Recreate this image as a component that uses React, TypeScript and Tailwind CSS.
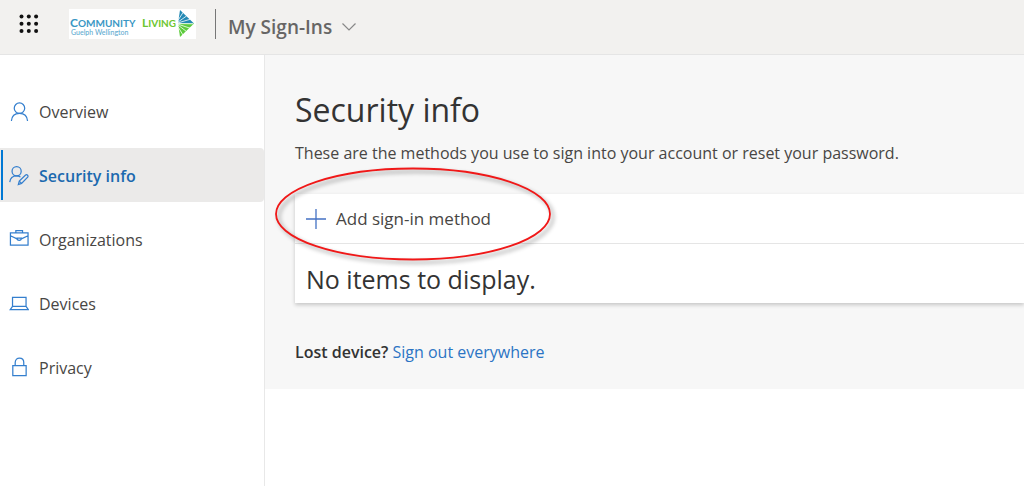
import type { ReactNode } from "react";

type NavItem = {
  label: string;
  icon: ReactNode;
  active?: boolean;
};

const NAV: NavItem[] = [
  {
    label: "Overview",
    icon: (
      <>
        <circle cx="11" cy="7" r="5.5" />
        <path d="M2.500 20.500c.4-5 3.800-8 8.500-8s8.100 3 8.500 8" />
      </>
    ),
  },
  {
    label: "Security info",
    active: true,
    icon: (
      <>
        <circle cx="8" cy="6" r="4.800" />
        <path d="M.8 17.500C1.200 13.500 4 10.800 8 10.800c1.600 0 2.800.5 4 1.400" />
        <path d="m9.800 20 1-3.600 6.600-6.400c1.600-1 3.200.8 2.200 2.200l-6.400 6.600zM10.800 16.400l2.400 2.400" />
      </>
    ),
  },
  {
    label: "Organizations",
    icon: (
      <>
        <path d="M1.500 3.500h18.500v12.800H1.500zM7.200 3.500V1.200h7v2.300M1.500 6.500l7 3.300M20 6.500l-7 3.300" />
        <path d="M8.400 9H13c0 3.200-4.600 3.200-4.600 0z" />
      </>
    ),
  },
  {
    label: "Devices",
    icon: <path d="M3.700 4h14.200v9.500H3.700zM3.700 13.500 1.300 17h19l-2.400-3.500" />,
  },
  {
    label: "Privacy",
    icon: (
      <>
        <path d="M4 8.500h14v10.500H4z" />
        <path d="M6.500 8.500V5.300c0-6.200 9-6.200 9 0v3.200" />
      </>
    ),
  },
];

const DOTS = [0, 1, 2].flatMap((row) => [0, 1, 2].map((col) => ({ row, col })));

function Logo() {
  return (
    <svg viewBox="0 0 127 30" className="h-[30px] w-[127px] bg-white" role="img" aria-label="Community Living Guelph Wellington">
      <g fontFamily="Lato, sans-serif">
        <text x="1" y="18" fontSize="12" fontWeight="700" fill="#3a97c4">
          C<tspan fontSize="10">OMMUNITY</tspan>
        </text>
        <text x="73" y="18" fontSize="12" fontWeight="700" fill="#6cc630">
          L<tspan fontSize="10">IVING</tspan>
        </text>
        <text x="2" y="26" fontSize="7" fontWeight="500" fill="#5fabd0">
          Guelph Wellington
        </text>
      </g>
      {/* fan of rays: blue above, green below */}
      <path d="M111 1 125 14.500H109z" fill="#2389b5" />
      <path d="M109 14.500h16L111 28z" fill="#5ccb3c" />
      <path d="m107 14.500 7-11M107 14.500l10.500-7.500M107 14.500l14-4.200M107 14.500l17 .3M107 14.500l14 4.700M107 14.500l10.500 8M107 14.500l7 11.500" stroke="#fff" strokeWidth=".8" />
    </svg>
  );
}

function Header() {
  return (
    <header className="flex h-[55px] items-start border-b border-[#e5e5e5] bg-[#f2f1ef] pl-[19px] pt-[9px]">
      <button type="button" aria-label="App launcher" className="flex h-[30px] w-5 items-center">
        <svg viewBox="0 0 20 20" className="size-5" fill="#111">
          {DOTS.map(({ row, col }) => (
            <circle key={`${row}-${col}`} cx={2.5 + col * 7.3} cy={2.5 + row * 7.3} r="2" />
          ))}
        </svg>
      </button>
      <a href="#" className="ml-[30px]">
        <Logo />
      </a>
      <div className="ml-[19px] h-[30px] w-px bg-[#777]" />
      <button type="button" className="ml-3 flex h-9 items-center gap-[10px] text-[19px] font-semibold text-[#676665]">
        My Sign-Ins
        <svg viewBox="0 0 14 8" className="h-2 w-[14px]" fill="none" stroke="#888" strokeWidth="1.200">
          <path d="m.5.5 6.500 6.500L13.500.5" />
        </svg>
      </button>
    </header>
  );
}

function Sidebar() {
  return (
    <nav className="w-[265px] shrink-0 border-r border-[#e8e8e8] pt-[29px]">
      <ul className="flex flex-col gap-[10px]">
        {NAV.map((item) => (
          <li key={item.label}>
            <a
              href="#"
              aria-current={item.active ? "page" : undefined}
              className={
                item.active
                  ? "relative flex h-[54px] items-center gap-[10px] rounded-r-sm bg-[#ebeae9] pl-[9px] pt-px text-base font-semibold text-[#1b69af] before:absolute before:inset-y-[2px] before:left-px before:w-[2px] before:bg-[#0078d4]"
                  : "flex h-[54px] items-center gap-[10px] pl-[9px] pt-px text-base text-[#484644]"
              }
            >
              <svg viewBox="0 0 21 21" className="h-[21px] w-5" fill="none" stroke="#347fce" strokeWidth="1.300">
                {item.icon}
              </svg>
              {item.label}
            </a>
          </li>
        ))}
      </ul>
    </nav>
  );
}

function Methods() {
  return (
    <section className="relative mt-[29px] bg-white shadow-[0_2px_4px_rgba(0,0,0,0.2)]">
      <div className="flex h-[50px] items-center border-b border-[#e5e5e5] pl-[11px]">
        <button type="button" className="flex items-center gap-[10px] text-[17px] text-[#484644]">
          <svg viewBox="0 0 20 20" className="size-5" fill="none" stroke="#4472c4" strokeWidth="1.300">
            <path d="M10 0v20M0 10h20" />
          </svg>
          Add sign-in method
        </button>
      </div>
      <p className="flex h-[59px] items-center pl-[11px] pt-[10px] text-[25px] leading-8 text-[#333]">
        No items to display.
      </p>
      <svg
        viewBox="0 0 286 102"
        className="pointer-events-none absolute -left-[21px] -top-[27px] h-[102px] w-[286px] drop-shadow-[3px_3px_2px_rgba(0,0,0,0.4)]"
        fill="none"
        stroke="#f01818"
        strokeWidth="1.800"
      >
        <ellipse cx="139" cy="47" rx="137" ry="45.500" />
      </svg>
    </section>
  );
}

export default function App() {
  return (
    <div className="flex min-h-screen flex-col bg-white font-['Open_Sans',sans-serif]">
      <Header />
      <div className="flex flex-1 items-stretch">
        <Sidebar />
        <main className="min-w-0 flex-1">
          <div className="bg-[#f7f7f7] pb-[25px] pl-[30px] pt-8">
            <h1 className="text-[32px] leading-[46px] text-[#333]">Security info</h1>
            <p className="mt-2 text-base leading-6 text-[#484644]">
              These are the methods you use to sign into your account or reset your password.
            </p>
            <Methods />
            <p className="mt-[37px] text-base leading-6 text-[#333]">
              <span className="font-semibold">Lost device?</span>{" "}
              <a href="#" className="text-[#2b74c4]">
                Sign out everywhere
              </a>
            </p>
          </div>
        </main>
      </div>
    </div>
  );
}
